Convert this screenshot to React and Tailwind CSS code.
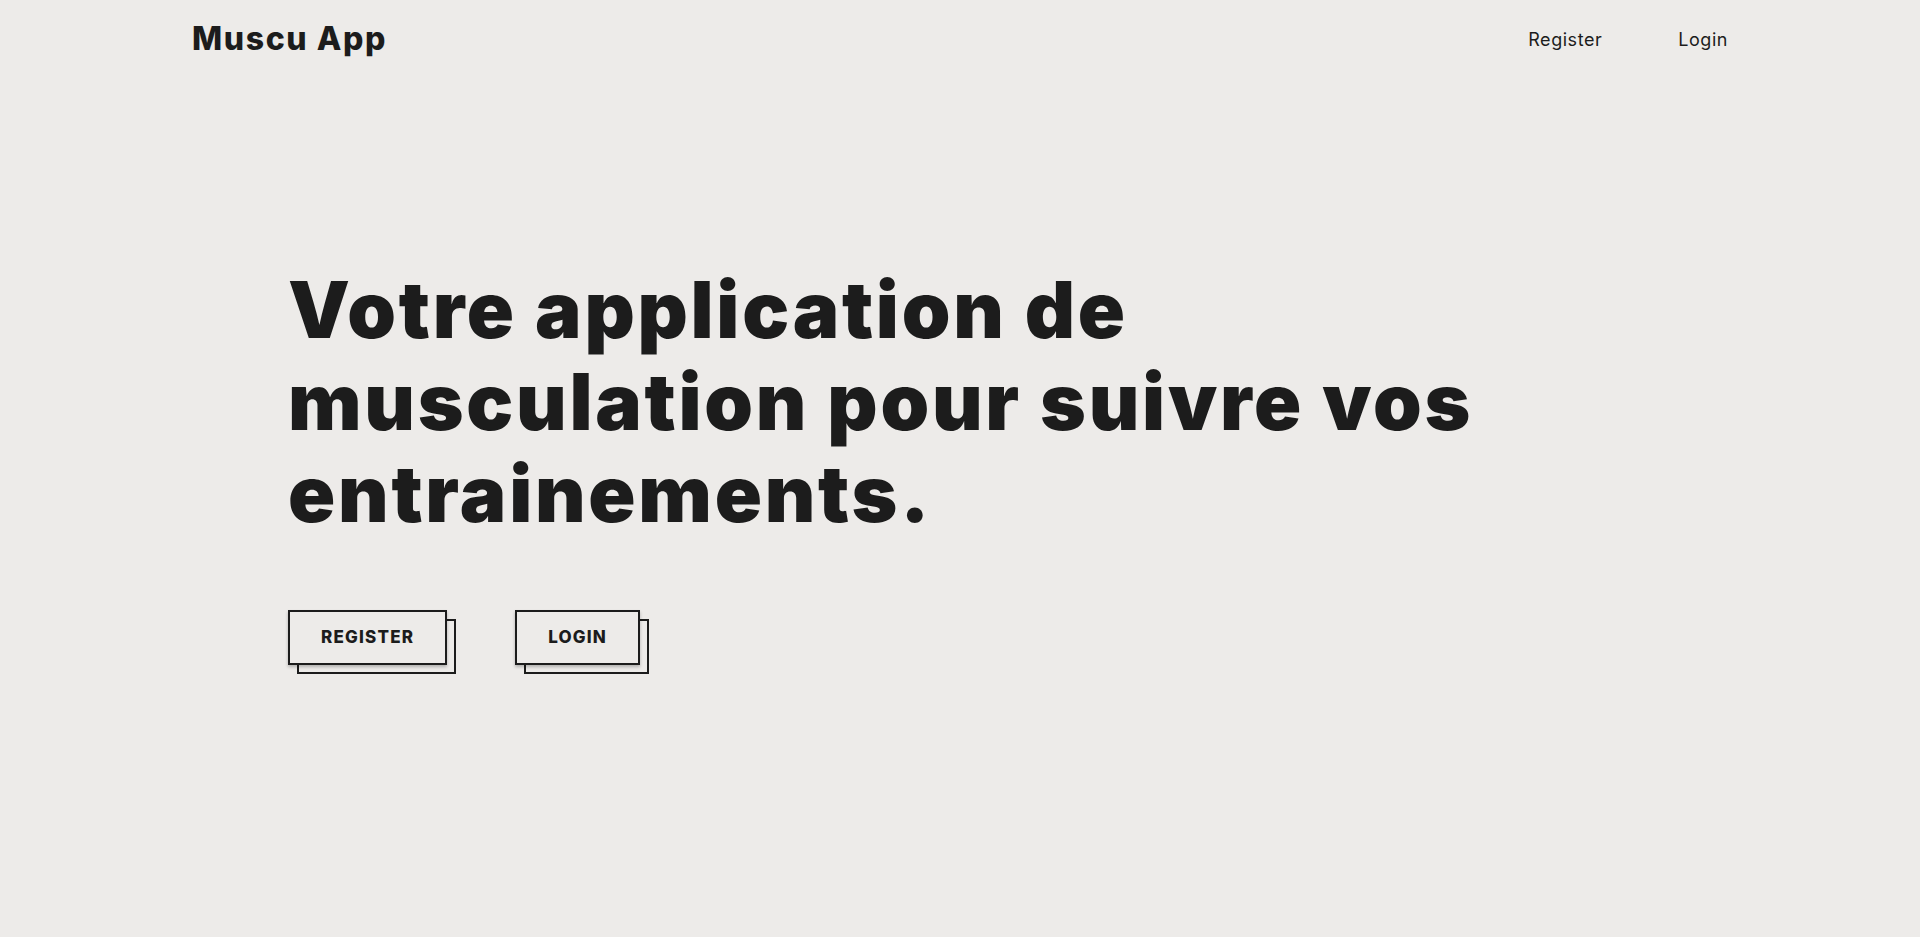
// Landing page for the workout tracker: header, headline and two call-to-action buttons.
const font = { fontFamily: "Inter, 'Liberation Sans', sans-serif" };

function StackButton({ children }) {
  return (
    <a href="#" className="relative inline-block">
      <span className="absolute left-[9px] top-[9px] h-full w-full border-2 border-[#1c1c1c]" />
      <span className="relative block border-2 border-[#1c1c1c] bg-[#edebe9] px-[31px] py-[17px] text-[17px] leading-[17px] font-extrabold tracking-[0.07em] text-[#1c1c1c] shadow-[0_2px_3px_rgba(0,0,0,0.25)]">
        {children}
      </span>
    </a>
  );
}

export default function App() {
  return (
    <div className="min-h-[937px] bg-[#edebe9] text-[#1c1c1c]" style={font}>
      <header className="mx-auto flex h-[78px] max-w-[1536px] items-center justify-between">
        <a href="#" className="text-[32px] font-extrabold tracking-[0.05em]">
          Muscu App
        </a>
        <nav className="flex items-center gap-[76px] text-[18px] tracking-[0.03em]">
          <a href="#">Register</a>
          <a href="#">Login</a>
        </nav>
      </header>

      <main className="mx-auto max-w-[1536px] pl-24 pt-[186px]">
        <h1 className="text-[78px] leading-[92px] font-black tracking-[0.035em]">
          Votre application de
          <br />
          musculation pour suivre vos
          <br />
          entrainements.
        </h1>
        <div className="mt-[70px] flex gap-[68px]">
          <StackButton>REGISTER</StackButton>
          <StackButton>LOGIN</StackButton>
        </div>
      </main>
    </div>
  );
}
